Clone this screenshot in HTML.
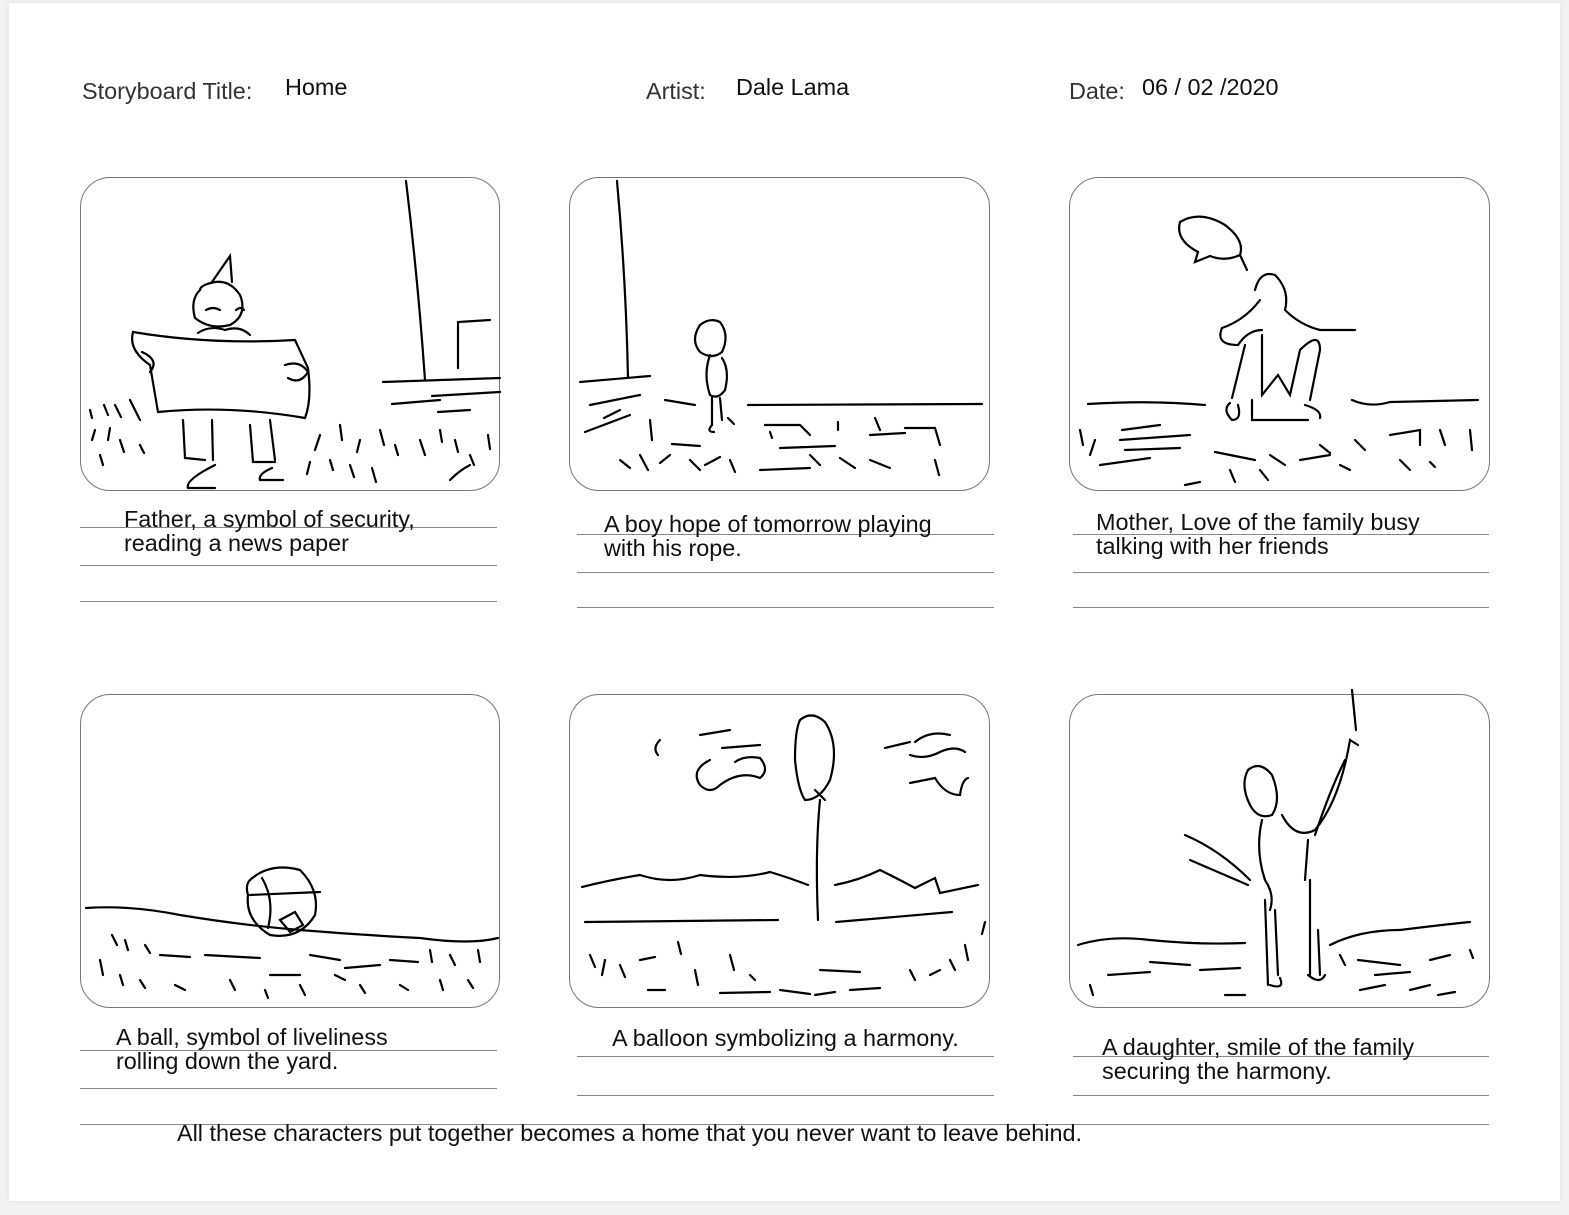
<!DOCTYPE html>
<html><head><meta charset="utf-8"><style>
html,body{margin:0;padding:0;background:#f1f2f4;}
body{width:1569px;height:1215px;position:relative;overflow:hidden;font-family:"Liberation Sans",Arial,sans-serif;color:#111;}
.page{position:absolute;left:9px;top:3px;width:1551px;height:1198px;background:#fff;box-shadow:0 0 6px rgba(0,0,0,0.08);}
.t{position:absolute;font-size:23.4px;white-space:nowrap;line-height:24px;}
.p{position:absolute;border:1.5px solid #777;border-radius:30px;width:418px;height:311px;box-sizing:border-box;}
.l{position:absolute;height:0;border-top:1.5px solid #888;}
svg{position:absolute;left:0;top:0;}
</style></head><body>
<div class="page"></div>
<div class="t" style="left:82px;top:79px;color:#333">Storyboard Title:</div>
<div class="t" style="left:285px;top:75px">Home</div>
<div class="t" style="left:646px;top:79px;color:#333">Artist:</div>
<div class="t" style="left:736px;top:75px">Dale Lama</div>
<div class="t" style="left:1069px;top:79px;color:#333">Date:</div>
<div class="t" style="left:1142px;top:75px">06 / 02 /2020</div>

<div class="p" style="left:80px;top:177px;width:420px;height:314px"></div>
<div class="p" style="left:569px;top:177px;width:421px;height:314px"></div>
<div class="p" style="left:1069px;top:177px;width:421px;height:314px"></div>
<div class="p" style="left:80px;top:694px;width:420px;height:314px"></div>
<div class="p" style="left:569px;top:694px;width:421px;height:314px"></div>
<div class="p" style="left:1069px;top:694px;width:421px;height:314px"></div>

<div class="l" style="left:80px;top:527px;width:417px"></div>
<div class="l" style="left:80px;top:565px;width:417px"></div>
<div class="l" style="left:80px;top:601px;width:417px"></div>
<div class="l" style="left:577px;top:534px;width:417px"></div>
<div class="l" style="left:577px;top:572px;width:417px"></div>
<div class="l" style="left:577px;top:607px;width:417px"></div>
<div class="l" style="left:1073px;top:534px;width:416px"></div>
<div class="l" style="left:1073px;top:572px;width:416px"></div>
<div class="l" style="left:1073px;top:607px;width:416px"></div>

<div class="l" style="left:80px;top:1050px;width:417px"></div>
<div class="l" style="left:80px;top:1088px;width:417px"></div>
<div class="l" style="left:577px;top:1056px;width:417px"></div>
<div class="l" style="left:577px;top:1095px;width:417px"></div>
<div class="l" style="left:1073px;top:1056px;width:416px"></div>
<div class="l" style="left:1073px;top:1095px;width:416px"></div>
<div class="l" style="left:80px;top:1124px;width:1409px"></div>

<div class="t" style="left:124px;top:507px">Father, a symbol of security,<br>reading a news paper</div>
<div class="t" style="left:604px;top:512px">A boy hope of tomorrow playing<br>with his rope.</div>
<div class="t" style="left:1096px;top:510px">Mother, Love of the family busy<br>talking with her friends</div>
<div class="t" style="left:116px;top:1025px">A ball, symbol of liveliness<br>rolling down the yard.</div>
<div class="t" style="left:612px;top:1026px">A balloon symbolizing a harmony.</div>
<div class="t" style="left:1102px;top:1035px">A daughter, smile of the family<br>securing the harmony.</div>
<div class="t" style="left:177px;top:1121px">All these characters put together becomes a home that you never want to leave behind.</div>

<svg width="1569" height="1215" fill="none" stroke="#000" stroke-width="2.2" stroke-linecap="round">
<path d="M406 181 Q418 280 425 380 M458 368 L458 322 L490 320 M383 382 L500 378 M392 404 L440 400 M432 396 L500 392 M438 412 L470 410"/>
<path d="M133 332 Q210 345 295 340 L308 368 Q312 400 305 418 Q230 405 158 412 L150 365 Q128 350 133 332 Z M142 352 Q160 360 150 372 M285 365 Q300 360 308 372 Q300 385 288 378"/>
<path d="M200 290 Q190 300 195 318 Q210 330 230 325 Q248 315 240 295 Q230 280 215 282 Q200 285 200 290 M212 282 L230 256 L232 282 M206 310 Q213 306 220 310 M236 310 Q241 306 244 310 M198 333 Q210 325 225 330 Q240 325 250 335"/>
<path d="M183 420 L185 458 L205 460 M215 465 Q185 480 188 488 L215 488 M250 425 L253 462 L275 462 M272 468 Q258 474 260 480 L283 480 M212 420 L213 460 M270 420 L275 460"/>
<path d="M90 410 l2 8 M104 405 l4 10 M115 405 l6 12 M130 400 l10 20 M95 430 l-3 10 M110 428 l-2 12 M120 440 l4 12 M100 455 l3 10 M140 445 l4 8 M320 435 l-5 15 M340 425 l2 15 M360 440 l-3 12 M380 430 l4 15 M395 445 l3 10 M420 440 l5 15 M440 430 l2 12 M455 440 l3 12 M470 455 l4 10 M488 435 l2 14 M330 460 l3 10 M350 465 l4 12 M372 468 l4 14 M310 462 l-3 12 M450 480 Q460 470 470 465"/>
<path d="M617 181 Q626 280 628 378 M580 382 L650 376 M590 405 L640 395 M585 432 L630 415 M604 418 L620 410 M650 420 L652 440 M665 400 L695 405 M748 405 L982 404"/>
<path d="M700 325 Q690 340 700 352 Q712 360 722 352 Q730 335 720 322 Q710 317 700 325 M710 355 Q703 375 710 395 Q718 400 725 390 Q730 370 722 358 M712 398 L712 425 M720 398 L722 420 M712 425 Q706 432 714 432 M728 418 L734 424"/>
<path d="M765 425 L800 425 L810 435 M770 432 L772 438 M838 430 L838 422 M875 418 L880 430 M870 435 L905 433 M905 428 L935 428 L940 445 M620 460 l10 8 M640 455 l8 15 M660 463 l10 -8 M690 460 l10 10 M705 465 l15 -8 M730 460 l5 12 M760 470 L810 468 M780 448 L835 446 M810 455 l10 10 M840 458 l15 10 M870 460 l20 8 M935 460 l4 15 M672 444 L700 446"/>
<path d="M1180 222 Q1200 210 1225 225 Q1245 240 1240 255 Q1225 262 1210 256 L1195 262 L1198 252 Q1175 240 1180 222 Z M1240 255 L1247 270"/>
<path d="M1255 290 Q1260 270 1275 275 Q1290 290 1285 310 Q1300 325 1320 330 L1355 330 M1260 300 Q1245 320 1222 328 Q1215 345 1238 345 Q1248 330 1262 330 M1245 345 L1232 398 M1262 335 L1262 395 L1278 375 L1290 395 L1300 350 Q1320 330 1320 350 L1310 400 M1230 403 Q1222 410 1232 420 Q1242 420 1238 405 M1252 400 L1252 420 L1308 420 M1305 405 Q1322 410 1320 418"/>
<path d="M1088 404 Q1150 400 1205 405 M1352 400 Q1370 408 1390 402 L1478 400 M1122 430 L1160 425 M1120 440 L1190 435 M1100 465 L1150 458 M1125 450 L1180 448 M1215 452 L1255 460 M1270 455 l15 10 M1300 460 l30 -5 M1320 445 l10 8 M1355 440 l10 10 M1390 435 L1420 430 L1420 445 M1440 430 l5 15 M1470 430 l2 20 M1080 430 l3 15 M1095 440 l-5 15 M1230 470 l5 12 M1260 470 l8 10 M1340 465 l10 5 M1400 460 l10 10 M1430 462 l5 5 M1185 485 L1200 482"/>
<path d="M86 908 Q130 905 180 915 Q240 925 300 930 Q360 935 420 938 Q470 945 498 938"/>
<path d="M250 880 Q270 862 300 870 Q320 890 315 915 Q300 940 270 935 Q245 920 248 895 Q245 885 250 880 M262 878 Q275 900 268 928 M250 895 L320 892 M280 920 L295 912 L303 925 L290 932 Z"/>
<path d="M112 935 l5 10 M125 940 l3 10 M145 945 l5 8 M160 955 l30 2 M205 955 L260 958 M310 955 L340 960 M345 968 L380 965 M390 960 L418 962 M430 950 l2 12 M450 955 l5 10 M478 950 l2 12 M100 960 l3 15 M120 975 l3 10 M140 980 l5 8 M175 985 l10 5 M230 980 l5 10 M265 990 l3 8 M300 985 l5 10 M270 975 L300 975 M335 975 l10 5 M360 985 l5 8 M400 985 l8 5 M440 980 l3 10 M468 980 l5 8"/>
<path d="M660 740 Q652 748 658 755 M700 735 L730 730 M722 748 L760 745 M710 760 Q690 770 700 785 Q710 795 720 785 Q740 770 760 778 Q770 770 760 758 Q745 755 735 762"/>
<path d="M800 720 Q812 710 825 722 Q840 745 830 780 Q820 800 805 800 Q798 790 795 760 Q795 730 800 720 M815 790 L825 800 M820 800 Q815 850 818 920"/>
<path d="M885 748 L910 742 M915 742 Q930 730 950 735 M910 755 Q925 760 940 752 Q955 745 965 752 M910 783 L935 778 Q945 795 960 795 Q962 780 968 778"/>
<path d="M582 887 Q610 880 640 875 Q670 885 700 875 Q740 880 770 872 Q790 878 808 885 M835 885 Q860 880 880 870 Q900 880 915 888 L935 878 L940 893 L978 885 M585 922 L778 920 M836 922 L952 912"/>
<path d="M590 955 l5 12 M605 960 l-3 15 M620 965 l5 12 M640 960 l15 -3 M648 990 L665 990 M678 942 l3 12 M695 970 l3 15 M730 955 l4 15 M750 975 l5 5 M720 993 L770 992 M780 990 L810 994 M820 970 L860 972 M815 995 L835 992 M850 990 L880 988 M910 970 l5 10 M930 975 l10 -5 M950 960 l5 10 M965 945 l3 15 M985 922 l-3 12"/>
<path d="M1248 770 Q1260 760 1272 775 Q1282 800 1272 815 Q1258 820 1250 805 Q1240 785 1248 770 M1262 820 Q1255 850 1265 880 Q1275 895 1270 910 M1282 815 Q1295 840 1315 830 Q1340 800 1350 740 L1358 745 M1352 690 L1356 730 M1185 835 Q1220 850 1250 880 M1190 860 Q1225 875 1248 885 M1308 840 L1305 880 M1315 835 Q1330 790 1345 760 M1265 900 L1268 985 M1275 910 L1278 975 M1310 880 L1310 975 M1318 930 L1320 975 M1270 985 Q1285 990 1280 978 M1308 975 Q1320 985 1325 975"/>
<path d="M1078 945 Q1110 935 1150 940 Q1200 945 1245 943 M1330 945 Q1360 930 1400 930 Q1440 925 1470 922 M1090 985 l3 10 M1108 975 L1150 972 M1150 962 L1190 965 M1200 970 L1240 968 M1225 995 L1245 995 M1340 955 l5 10 M1358 960 L1400 965 M1360 990 L1385 985 M1375 975 L1410 972 M1410 990 L1430 985 M1430 960 L1450 955 M1438 995 L1455 992 M1470 950 l3 8"/>
</svg>
</body></html>
